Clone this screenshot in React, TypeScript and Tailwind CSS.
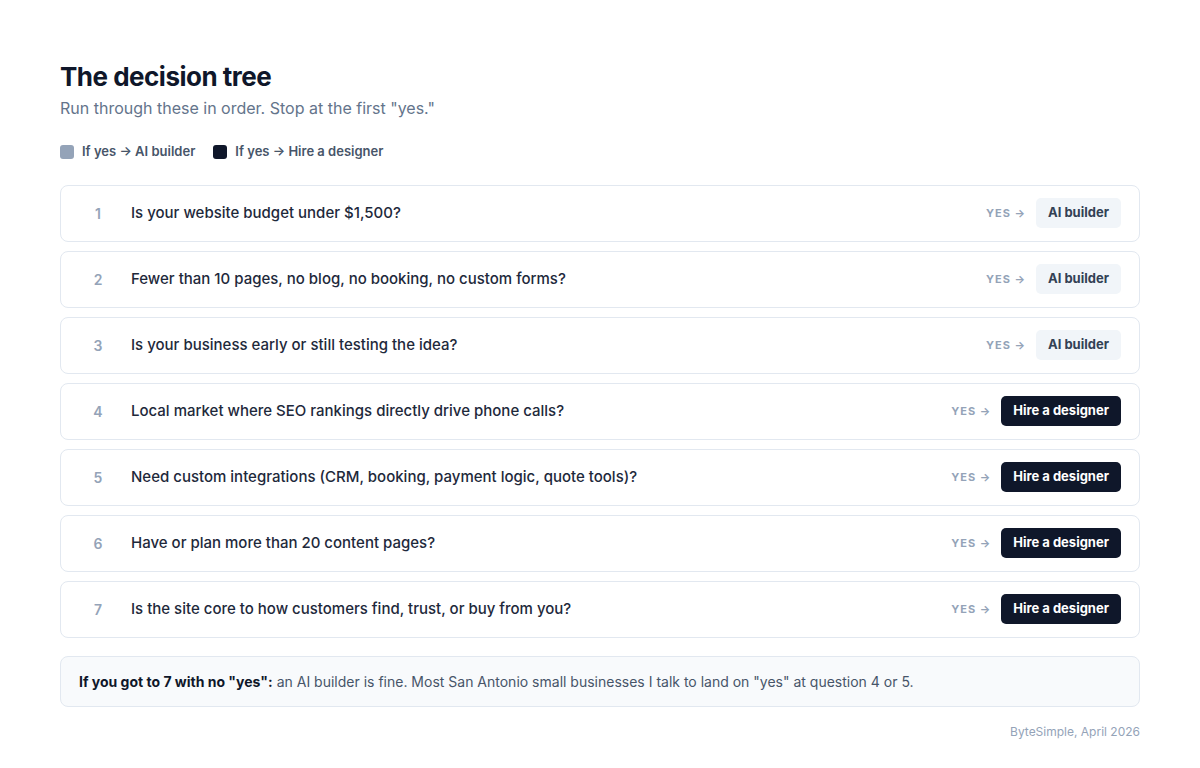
import React from "react";

const rows: [string, boolean][] = [
  ["Is your website budget under $1,500?", false],
  ["Fewer than 10 pages, no blog, no booking, no custom forms?", false],
  ["Is your business early or still testing the idea?", false],
  ["Local market where SEO rankings directly drive phone calls?", true],
  ["Need custom integrations (CRM, booking, payment logic, quote tools)?", true],
  ["Have or plan more than 20 content pages?", true],
  ["Is the site core to how customers find, trust, or buy from you?", true],
];

export default function App() {
  return (
    <div className="min-h-[768px] bg-white px-[60px] pt-[60px]" style={{ fontFamily: "Inter, 'Noto Sans', sans-serif" }}>
      <h1 className="text-[26px] leading-[34px] font-bold tracking-[-0.5px] text-[#0f172a]">The decision tree</h1>
      <p className="mt-[2px] text-[16px] leading-[24px] text-[#64748b]">Run through these in order. Stop at the first "yes."</p>
      <div className="mt-[22px] flex items-center gap-[18px] text-[13px] font-semibold text-[#475569]">
        <div className="flex items-center gap-[8px]"><span className="h-[14px] w-[14px] rounded-[3px] bg-[#94a3b8]" />If yes → AI builder</div>
        <div className="flex items-center gap-[8px]"><span className="h-[14px] w-[14px] rounded-[3px] bg-[#0f172a]" />If yes → Hire a designer</div>
      </div>
      <div className="mt-[23px] flex flex-col gap-[9px]">
        {rows.map(([q, d], i) => (
          <div key={i} className="flex h-[57px] items-center rounded-[8px] border border-[#e2e8f0] pl-[27px] pr-[18px]">
            <span className="w-[20px] text-center text-[14px] font-semibold text-[#94a3b8]">{i + 1}</span>
            <span className="ml-[23px] flex-1 text-[15px] font-medium text-[#1e293b]">{q}</span>
            <span className="mr-[10px] text-[11px] font-bold tracking-[1px] text-[#94a3b8]">YES →</span>
            {d ? (
              <span className="rounded-[5px] bg-[#0f172a] px-[12px] py-[5px] text-[13px] font-bold text-white">Hire a designer</span>
            ) : (
              <span className="rounded-[5px] bg-[#f1f5f9] px-[12px] py-[5px] text-[13px] font-bold text-[#334155]">AI builder</span>
            )}
          </div>
        ))}
      </div>
      <div className="mt-[18px] flex h-[51px] items-center rounded-[8px] border border-[#e2e8f0] bg-[#f8fafc] px-[18px] text-[14px] text-[#475569]">
        <span><b className="font-bold text-[#0f172a]">If you got to 7 with no "yes":</b> an AI builder is fine. Most San Antonio small businesses I talk to land on "yes" at question 4 or 5.</span>
      </div>
      <div className="mt-[16px] text-right text-[12px] text-[#94a3b8]">ByteSimple, April 2026</div>
    </div>
  );
}
